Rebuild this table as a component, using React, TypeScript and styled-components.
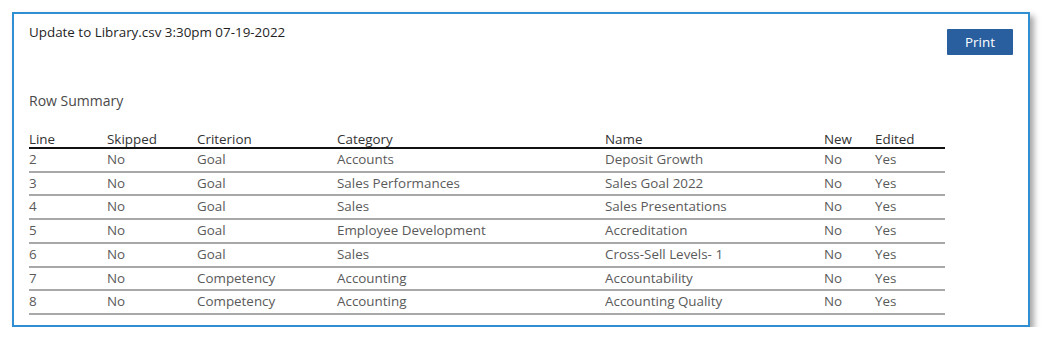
import React from 'react';
import styled, { createGlobalStyle } from 'styled-components';

type Row = {
  line: number;
  skipped: string;
  criterion: string;
  category: string;
  name: string;
  isNew: string;
  edited: string;
};

const rows: Row[] = [
  { line: 2, skipped: 'No', criterion: 'Goal', category: 'Accounts', name: 'Deposit Growth', isNew: 'No', edited: 'Yes' },
  { line: 3, skipped: 'No', criterion: 'Goal', category: 'Sales Performances', name: 'Sales Goal 2022', isNew: 'No', edited: 'Yes' },
  { line: 4, skipped: 'No', criterion: 'Goal', category: 'Sales', name: 'Sales Presentations', isNew: 'No', edited: 'Yes' },
  { line: 5, skipped: 'No', criterion: 'Goal', category: 'Employee Development', name: 'Accreditation', isNew: 'No', edited: 'Yes' },
  { line: 6, skipped: 'No', criterion: 'Goal', category: 'Sales', name: 'Cross-Sell Levels- 1', isNew: 'No', edited: 'Yes' },
  { line: 7, skipped: 'No', criterion: 'Competency', category: 'Accounting', name: 'Accountability', isNew: 'No', edited: 'Yes' },
  { line: 8, skipped: 'No', criterion: 'Competency', category: 'Accounting', name: 'Accounting Quality', isNew: 'No', edited: 'Yes' },
];

const columns = [
  { label: 'Line', width: 78 },
  { label: 'Skipped', width: 90 },
  { label: 'Criterion', width: 140 },
  { label: 'Category', width: 268 },
  { label: 'Name', width: 219 },
  { label: 'New', width: 51 },
  { label: 'Edited', width: 70 },
];

const App: React.FC = () => {
  return (
    <>
      <GlobalStyle />
      <Panel>
        <TopBar>
          <Title>Update to Library.csv 3:30pm 07-19-2022</Title>
          <PrintButton type="button">Print</PrintButton>
        </TopBar>

        <SectionTitle>Row Summary</SectionTitle>

        <Table>
          <colgroup>
            {columns.map((c) => (
              <col key={c.label} width={c.width} />
            ))}
          </colgroup>
          <thead>
            <tr>
              {columns.map((c) => (
                <Th key={c.label}>{c.label}</Th>
              ))}
            </tr>
          </thead>
          <tbody>
            {rows.map((r) => (
              <tr key={r.line}>
                <Td>{r.line}</Td>
                <Td>{r.skipped}</Td>
                <Td>{r.criterion}</Td>
                <Td>{r.category}</Td>
                <Td>{r.name}</Td>
                <Td>{r.isNew}</Td>
                <Td>{r.edited}</Td>
              </tr>
            ))}
          </tbody>
        </Table>
      </Panel>
    </>
  );
};

export default App;

const GlobalStyle = createGlobalStyle`
  body {
    margin: 0;
    background: #ffffff;
    font-family: 'Open Sans', 'Liberation Sans', sans-serif;
  }
`;

const Panel = styled.section`
  box-sizing: border-box;
  margin: 12px 0 0 12px;
  width: 1018px;
  height: 315px;
  border: 2px solid #2f8fd2;
  background: #ffffff;
  box-shadow: 4px 4px 6px rgba(0, 0, 0, 0.35);
  padding: 9px 15px 0 15px;
  display: flex;
  flex-direction: column;
`;

const TopBar = styled.div`
  display: flex;
  justify-content: space-between;
  align-items: flex-start;
`;

const Title = styled.h2`
  margin: 0;
  font-size: 13.4px;
  line-height: 18px;
  font-weight: 400;
  color: #1f1f1f;
`;

const PrintButton = styled.button`
  margin-top: 6px;
  width: 66px;
  height: 26px;
  border: none;
  border-radius: 1px;
  background: #2a5f9f;
  color: #ffffff;
  font-family: 'Open Sans', 'Liberation Sans', sans-serif;
  font-size: 13.4px;
  padding: 0 0 1px;
  cursor: pointer;
`;

const SectionTitle = styled.h3`
  margin: 36px 0 0;
  font-size: 14px;
  line-height: 20px;
  font-weight: 400;
  color: #4a4a4a;
`;

const Table = styled.table`
  margin-top: 21px;
  width: 916px;
  border-collapse: collapse;
  table-layout: fixed;
  font-size: 13.4px;
`;

const Th = styled.th`
  text-align: left;
  font-weight: 400;
  color: #333333;
  padding: 0;
  height: 15px;
  line-height: 15px;
  border-bottom: 2.5px solid #111111;
`;

const Td = styled.td`
  padding: 0;
  height: 21.7px;
  line-height: 21.7px;
  color: #5a5a5a;
  border-bottom: 2px solid #a8a8a8;
`;
